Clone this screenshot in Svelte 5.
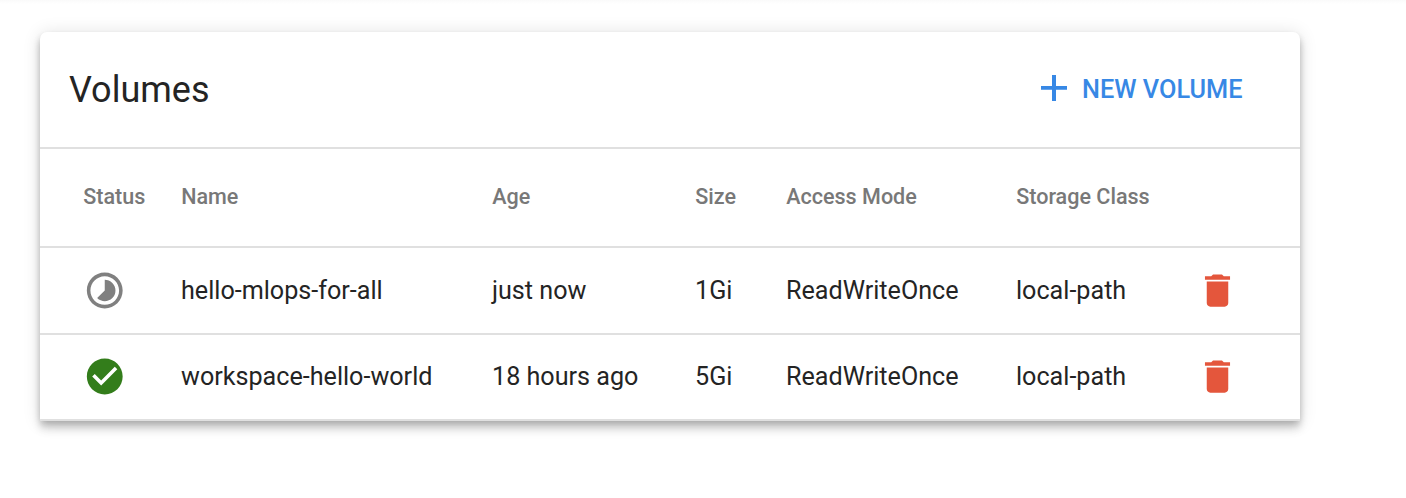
<script>
  const rows = [
    { ready: false, name: 'hello-mlops-for-all', age: 'just now', size: '1Gi', mode: 'ReadWriteOnce', storage: 'local-path' },
    { ready: true, name: 'workspace-hello-world', age: '18 hours ago', size: '5Gi', mode: 'ReadWriteOnce', storage: 'local-path' }
  ];
</script>

<main>
  <section class="card">
    <header>
      <h1>Volumes</h1>
      <button class="new">
        <svg class="plus" viewBox="0 0 26 26"><path d="M11 0h4v11h11v3.7H15V26h-4V14.7H0V11h11z" /></svg>
        <span>NEW VOLUME</span>
      </button>
    </header>
    <div class="row head">
      <span>Status</span><span>Name</span><span>Age</span><span>Size</span><span>Access Mode</span><span>Storage Class</span>
    </div>
    {#each rows as row}
      <div class="row">
        <span class="status">
          {#if row.ready}
            <svg class="ready" viewBox="0 0 24 24"><path d="M12 2C6.48 2 2 6.48 2 12s4.48 10 10 10 10-4.48 10-10S17.52 2 12 2zm-2 15l-5-5 1.41-1.41L10 14.17l7.59-7.59L19 8l-9 9z" /></svg>
          {:else}
            <svg class="pending" viewBox="0 0 24 24"><path d="M16.24 7.76C15.07 6.59 13.54 6 12 6v6l-4.24 4.24c2.34 2.34 6.14 2.34 8.49 0 2.34-2.34 2.34-6.14-.01-8.48zM12 2C6.48 2 2 6.48 2 12s4.48 10 10 10 10-4.48 10-10S17.52 2 12 2zm0 18c-4.42 0-8-3.58-8-8s3.58-8 8-8 8 3.58 8 8-3.58 8-8 8z" /></svg>
          {/if}
        </span>
        <span>{row.name}</span><span>{row.age}</span><span>{row.size}</span><span>{row.mode}</span><span>{row.storage}</span>
        <button class="delete" aria-label="Delete volume">
          <svg viewBox="0 0 24 24"><path d="M6 19c0 1.1.9 2 2 2h8c1.1 0 2-.9 2-2V7H6v12zM19 4h-3.5l-1-1h-5l-1 1H5v2h14V4z" /></svg>
        </button>
      </div>
    {/each}
  </section>
</main>

<style>
  :global(body) { background: #fff; }
  main { height: 498px; box-sizing: border-box; padding: 32px 106px 0 40px; font-family: Roboto, sans-serif; color: #242424; background: linear-gradient(#fafafa, #fff 4px); }
  .card { background: #fff; border-radius: 7px 7px 2px 2px; box-shadow: 0 3.6px 7.2px -1.8px rgba(0,0,0,.2), 0 7.2px 9px rgba(0,0,0,.14), 0 1.8px 18px rgba(0,0,0,.12); }
  header { height: 117px; box-sizing: border-box; border-bottom: 2px solid #e0e0e0; padding: 0 57.5px 0 29px; display: flex; align-items: center; justify-content: space-between; }
  h1 { margin: 0; font-size: 36px; line-height: 44px; font-weight: 400; letter-spacing: 0; }
  button { border: 0; padding: 0; background: none; font: inherit; }
  svg { display: block; fill: currentColor; }
  .new { display: flex; align-items: center; gap: 15px; color: #3788e5; font-size: 25.3px; font-weight: 500; }
  .plus { width: 26px; height: 26px; margin-bottom: 4px; }
  .row { height: 87px; box-sizing: border-box; border-bottom: 2px solid #e0e0e0; display: grid; grid-template-columns: 98px 311px 203px 91px 230px 179.5px 1fr; align-items: center; padding-left: 43px; font-size: 25.15px; white-space: nowrap; }
  .row:last-child { height: 86px; padding-bottom: 1px; border-radius: 0 0 2px 2px; }
  .head { height: 99px; padding-bottom: 2px; padding-left: 43.2px; color: #787878; font-size: 21.55px; font-weight: 500; }
  .status svg { width: 43.5px; height: 43px; }
  .ready { color: #337d1b; }
  .pending { color: #808080; }
  .delete { color: #e4563c; justify-self: start; }
  .delete svg { width: 43px; height: 43px; }
</style>
